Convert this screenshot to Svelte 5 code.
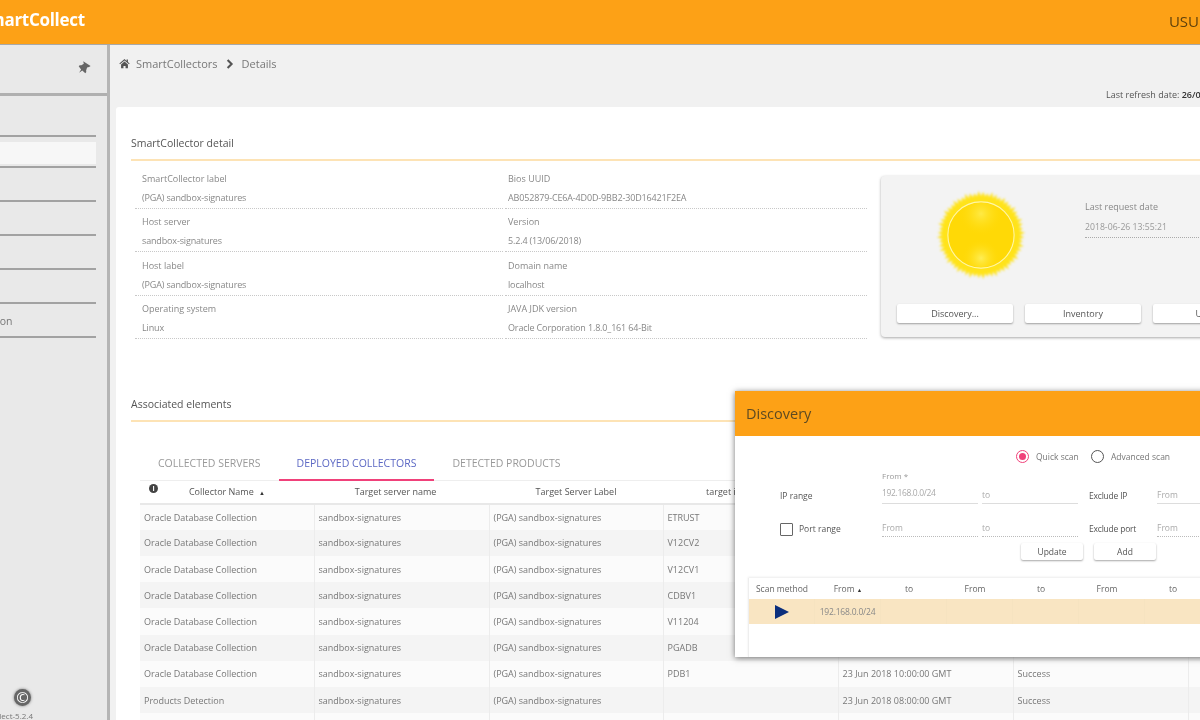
<script>
  const details = [
    ['SmartCollector label', '(PGA) sandbox-signatures', 'Bios UUID', 'AB052879-CE6A-4D0D-9BB2-30D16421F2EA'],
    ['Host server', 'sandbox-signatures', 'Version', '5.2.4 (13/06/2018)'],
    ['Host label', '(PGA) sandbox-signatures', 'Domain name', 'localhost'],
    ['Operating system', 'Linux', 'JAVA JDK version', 'Oracle Corporation 1.8.0_161 64-Bit']
  ];

  const oracle = 'Oracle Database Collection';
  const rows = [
    [oracle, 'ETRUST', '23 Jun 2018 10:00:00 GMT'],
    [oracle, 'V12CV2', '23 Jun 2018 10:00:00 GMT'],
    [oracle, 'V12CV1', '23 Jun 2018 10:00:00 GMT'],
    [oracle, 'CDBV1', '23 Jun 2018 10:00:00 GMT'],
    [oracle, 'V11204', '23 Jun 2018 10:00:00 GMT'],
    [oracle, 'PGADB', '23 Jun 2018 10:00:00 GMT'],
    [oracle, 'PDB1', '23 Jun 2018 10:00:00 GMT'],
    ['Products Detection', '', '23 Jun 2018 08:00:00 GMT'],
    ['Products Detection', '', '23 Jun 2018 08:00:00 GMT']
  ];

  const navItems = ['Overview', 'Servers', 'Collectors', 'Products', 'Reports', 'Administration'];
  const scanCols = ['From', 'to', 'From', 'to', 'From', 'to'];

  // jagged edge of the sun
  const rays = Array.from({ length: 120 }, (_, i) => {
    const a = (i / 120) * Math.PI * 2;
    const r = i % 2 ? 46 + (i * 7 % 3) : 42;
    return `${(50 + r * Math.cos(a)).toFixed(1)},${(50 + r * Math.sin(a)).toFixed(1)}`;
  }).join(' ');
</script>

<div class="page">
  <header class="topbar">
    <span class="brand">SmartCollect</span>
    <span class="user">USU</span>
  </header>

  <div class="shell">
    <aside class="sidebar">
      <div class="pin-row">
        <svg class="pin" viewBox="0 0 16 16" width="16" height="16"><path fill="#666" d="M6.2 1.2 13.6 6l-1.5 1.1-2 .3-1 3 .2 1.7-1 1.1-3-2.6-3.2 2.2 2-3.3L1.7 6.300 2.700 5.200l1.700.1 2.400-1.600z" /></svg>
      </div>
      <ul class="nav">
        {#each navItems as item, i}
          <li class:active={i === 0}><span>{item}</span></li>
        {/each}
      </ul>
      <div class="side-foot">
        <span class="copy">©</span>
        <span class="ver">SmartCollect-5.2.4</span>
      </div>
    </aside>

    <main class="content">
      <div class="crumbs">
        <svg viewBox="0 0 16 16" width="11" height="11"><path fill="#555" d="M8 1.500 0.500 8l1 1.100L8 3.500l6.500 5.600 1-1.100-2.500-2.200V2h-2v2.500zM3 9.500V15h3.500v-3.500h3V15H13V9.500L8 5.200z" /></svg>
        <span>SmartCollectors</span>
        <svg viewBox="0 0 10 12" width="8" height="10"><path fill="none" stroke="#555" stroke-width="2.600" d="M2 1l5 5-5 5" /></svg>
        <span>Details</span>
      </div>
      <div class="refresh">Last refresh date: <b>26/06/2018 13:55:21</b></div>

      <section class="card">
        <h2>SmartCollector detail</h2>
        <div class="detail-row">
          <div class="fields">
            {#each details as d}
              <div class="field"><label>{d[0]}</label><p>{d[1]}</p></div>
              <div class="field"><label>{d[2]}</label><p>{d[3]}</p></div>
            {/each}
          </div>
          <div class="status">
            <div class="status-top">
              <svg class="sun" viewBox="0 0 100 100" width="92" height="92">
                <defs>
                  <radialGradient id="top" cx="50%" cy="17%" r="35%">
                    <stop offset="0" stop-color="#ffea45" /><stop offset="1" stop-color="#ffd906" stop-opacity="0" />
                  </radialGradient>
                  <radialGradient id="bot" cx="50%" cy="86%" r="30%">
                    <stop offset="0" stop-color="#ffee55" /><stop offset="1" stop-color="#ffd906" stop-opacity="0" />
                  </radialGradient>
                </defs>
                <polygon class="rays" points={rays} fill="#ffe31a" />
                <circle cx="50" cy="50" r="36" fill="#ffd906" stroke="#fff6a8" stroke-width="1.200" />
                <circle cx="50" cy="50" r="35" fill="url(#top)" />
                <circle cx="50" cy="50" r="35" fill="url(#bot)" />
              </svg>
              <div class="last-req">
                <label>Last request date</label>
                <p>2018-06-26 13:55:21</p>
              </div>
            </div>
            <div class="status-btns">
              <button>Discovery...</button>
              <button>Inventory</button>
              <button>Update</button>
            </div>
          </div>
        </div>

        <h2 class="assoc">Associated elements</h2>
        <div class="tabs">
          <span>COLLECTED SERVERS</span>
          <span class="on">DEPLOYED COLLECTORS</span>
          <span>DETECTED PRODUCTS</span>
        </div>
        <table class="grid">
          <thead>
            <tr>
              <th class="first"><i class="info">i</i>Collector Name <em>▲</em></th>
              <th class="nudge">Target server name</th>
              <th>Target Server Label</th>
              <th>target instance name</th>
              <th>Start date</th>
              <th>Status</th>
              <th></th>
            </tr>
          </thead>
          <tbody>
            {#each rows as r}
              <tr>
                <td>{r[0]}</td>
                <td>sandbox-signatures</td>
                <td>(PGA) sandbox-signatures</td>
                <td>{r[1]}</td>
                <td>{r[2]}</td>
                <td>Success</td>
                <td></td>
              </tr>
            {/each}
          </tbody>
        </table>
      </section>
    </main>
  </div>

  <div class="modal">
    <div class="modal-head">Discovery</div>
    <div class="modal-body">
      <div class="radios">
        <span class="radio checked"></span><span>Quick scan</span>
        <span class="radio"></span><span>Advanced scan</span>
      </div>
      <div class="form-row ip">
        <span class="row-label">IP range</span>
        <div class="inp solid"><small>From *</small><span class="val">192.168.0.0/24</span></div>
        <div class="inp solid"><span>to</span></div>
        <span class="ex-label">Exclude IP</span>
        <div class="inp solid"><span>From</span></div>
      </div>
      <div class="form-row port">
        <span class="row-label check"><i class="box"></i>Port range</span>
        <div class="inp dotted"><span>From</span></div>
        <div class="inp dotted"><span>to</span></div>
        <span class="ex-label">Exclude port</span>
        <div class="inp dotted"><span>From</span></div>
      </div>
      <div class="form-btns">
        <button>Update</button>
        <button>Add</button>
      </div>
      <div class="scan">
        <div class="scan-head">
          <span>Scan method</span>
          <span>From <em>▲</em></span>
          {#each scanCols.slice(1) as c}<span class="shift">{c}</span>{/each}
        </div>
        <div class="scan-row">
          <span><svg viewBox="0 0 14 14" width="14" height="14"><path fill="#0b2f7d" d="M0 0l14 7-14 7z" /></svg></span>
          <span>192.168.0.0/24</span>
          {#each scanCols.slice(1) as _}<span></span>{/each}
        </div>
      </div>
    </div>
  </div>
</div>

<style>
  :global(body) {
    margin: 0;
    background: #f1f1f1;
  }
  .page {
    position: relative;
    width: 1200px;
    height: 720px;
    overflow: hidden;
    font-family: "Open Sans", "Liberation Sans", sans-serif;
    color: #666;
    filter: blur(0.7px);
  }
  .topbar {
    height: 45px;
    background: #fda116;
    border-bottom: 1px solid #a8a8a8;
    box-sizing: border-box;
    display: flex;
    align-items: center;
    justify-content: space-between;
    width: 1200px;
  }
  .brand {
    margin-left: -21px;
    color: #fff;
    font-weight: 700;
    font-size: 17px;
    letter-spacing: -0.3px;
    margin-top: -6px;
  }
  .user {
    color: #5f410c;
    font-size: 15px;
    margin-right: 1px;
    margin-top: -2px;
  }
  .shell {
    display: flex;
    width: 1700px;
    height: 675px;
    margin-left: -190px;
  }
  .sidebar {
    width: 297px;
    flex: none;
    background: #e9e9e9;
    border-right: 3px solid #b5b5b5;
    display: flex;
    flex-direction: column;
  }
  .pin-row {
    height: 48px;
    border-bottom: 3px solid #b0b0b0;
    display: flex;
    align-items: center;
    justify-content: flex-end;
    padding-right: 14px;
  }
  .pin {
    margin-top: -2px;
  }
  .nav {
    list-style: none;
    margin: 39px 11px 0 0;
    padding: 0;
    border-top: 2px solid #a2a2a2;
  }
  .nav li {
    height: 32px;
    border-bottom: 2px solid #a2a2a2;
    padding-left: 130px;
    font-size: 10.500px;
    line-height: 34px;
    color: #777;
    white-space: nowrap;
  }
  .nav li.active {
    height: 29px;
    padding-left: 0;
  }
  .nav li.active span {
    display: block;
    height: 22px;
    padding-left: 130px;
    line-height: 22px;
    background: #f7f7f7;
    position: relative;
    top: 5px;
  }
  .side-foot {
    margin-top: auto;
    display: flex;
    flex-direction: column;
    align-items: flex-end;
    padding-right: 74px;
  }
  .copy {
    width: 17px;
    height: 17px;
    margin-right: 2px;
    border-radius: 50%;
    background: #666;
    box-shadow: 0 0 3px #777;
    color: #fff;
    font: 15px/17px "Open Sans", sans-serif;
    text-align: center;
  }
  .ver {
    font-size: 8px;
    line-height: 9px;
    margin-top: 5px;
    color: #777;
    height: 9px;
  }
  .content {
    flex: 1;
    padding: 0 0 0 6px;
    background: #f1f1f1;
  }
  .crumbs {
    height: 37px;
    margin-left: 3px;
    display: flex;
    align-items: center;
    gap: 6px;
    font-size: 11px;
    color: #777;
  }
  .crumbs span + svg {
    margin: 0 2px;
  }
  .refresh {
    height: 25px;
    box-sizing: border-box;
    padding: 7px 0 0 990px;
    font-size: 9px;
    line-height: 11px;
    color: #555;
  }
  .refresh b {
    color: #333;
    font-weight: 600;
  }
  .card {
    background: #fff;
    border-radius: 3px;
    padding: 28px 0 0 15px;
    height: 640px;
  }
  h2 {
    margin: 0;
    font-size: 10.500px;
    line-height: 16px;
    font-weight: 400;
    color: #555;
    padding-bottom: 8px;
    border-bottom: 2px solid #fde3b5;
  }
  .detail-row {
    display: flex;
    margin-top: 12px;
  }
  .fields {
    width: 734px;
    display: grid;
    grid-template-columns: 370px 364px;
    grid-auto-rows: 36px;
    row-gap: 7.400px;
    margin-left: 4px;
    flex: none;
  }
  .field {
    border-bottom: 1px dotted #c8c8c8;
    padding-left: 7px;
    box-sizing: border-box;
    margin-right: 2px;
  }
  .field:nth-child(even) {
    padding-left: 3px;
  }
  label {
    display: block;
    font-size: 9px;
    line-height: 12px;
    color: #888;
  }
  .field p {
    margin: 7px 0 0;
    font-size: 9px;
    line-height: 12px;
    color: #888;
    letter-spacing: -0.15px;
    white-space: nowrap;
  }
  .status {
    width: 440px;
    height: 161px;
    margin: 3px 0 0 12px;
    flex: none;
    background: #f3f3f3;
    border-radius: 4px;
    box-shadow: 0 1px 3px rgba(0, 0, 0, 0.35);
    box-sizing: border-box;
    padding: 13px 0 0 16px;
  }
  .status-top {
    height: 115px;
    display: flex;
    align-items: flex-start;
  }
  .sun {
    margin-left: 38px;
    flex: none;
  }
  .rays {
    filter: blur(1px);
  }
  .last-req {
    margin: 12px 0 0 58px;
    width: 200px;
    border-bottom: 1px dotted #aaa;
    height: 36px;
  }
  .last-req p {
    margin: 8px 0 0;
    font-size: 8.700px;
    color: #999;
    line-height: 12px;
  }
  button {
    background: #fff;
    border: 0;
    border-radius: 2px;
    box-shadow: 0 1px 2px rgba(0, 0, 0, 0.35);
    font-family: inherit;
    font-size: 9px;
    color: #555;
    padding: 0;
  }
  .status-btns {
    display: flex;
    gap: 12px;
  }
  .status-btns button {
    width: 116px;
    height: 19px;
  }
  .assoc {
    margin-top: 57px;
  }
  .tabs {
    display: flex;
    margin: 26px 0 0 9px;
    height: 32px;
    font-size: 10.500px;
    line-height: 30px;
    color: #999;
  }
  .tabs span {
    padding: 0 18px;
  }
  .tabs .on {
    color: #5c68c4;
    border-bottom: 2px solid #f0417a;
    height: 31px;
  }
  .grid {
    margin-left: 9px;
    border-collapse: collapse;
    table-layout: fixed;
    width: 1235px;
    border-top: 1px solid #eee;
    font-size: 9px;
  }
  .grid th:nth-child(1) { width: 174px; }
  .grid th:nth-child(2) { width: 175px; }
  .grid th:nth-child(3) { width: 174px; }
  .grid th:nth-child(4) { width: 175px; }
  .grid th:nth-child(5) { width: 175px; }
  .grid th:nth-child(6) { width: 175px; }
  .grid th {
    height: 23px;
    box-sizing: border-box;
    font-weight: 400;
    color: #555;
    border-bottom: 2px solid #e8e8e8;
    padding: 0;
    white-space: nowrap;
    text-align: center;
  }
  .grid th.first {
    position: relative;
  }
  .grid th.nudge {
    padding-right: 12px;
  }
  .info {
    position: absolute;
    left: 9px;
    top: 3px;
    width: 9px;
    height: 9px;
    border-radius: 50%;
    background: #444;
    color: #fff;
    font: 700 7px/9px "Open Sans", sans-serif;
  }
  .grid em {
    font-style: normal;
    font-size: 6px;
    margin-left: 3px;
    color: #333;
  }
  .grid td {
    height: 26.200px;
    padding: 0 0 0 4px;
    box-sizing: border-box;
    color: #777;
    white-space: nowrap;
    overflow: hidden;
    border-right: 1px solid #ececec;
  }
  .grid tbody tr:nth-child(odd) td {
    background: #fbfbfb;
  }
  .grid tbody tr:nth-child(even) td {
    background: #f4f4f4;
  }
  .modal {
    position: absolute;
    left: 735px;
    top: 391px;
    width: 520px;
    height: 266px;
    background: #fff;
    box-shadow: 0 1px 6px rgba(0, 0, 0, 0.55);
    z-index: 5;
    color: #777;
  }
  .modal-head {
    height: 45px;
    background: #fda116;
    color: #5d4a22;
    font-size: 14.500px;
    line-height: 45px;
    padding-left: 11px;
  }
  .modal-body {
    padding: 0 0 0 13px;
  }
  .radios {
    height: 40px;
    display: flex;
    align-items: center;
    padding-left: 268px;
    font-size: 8.500px;
    box-sizing: border-box;
  }
  .radios span:nth-child(2) {
    margin: 0 10px 0 7px;
    width: 45px;
    white-space: nowrap;
  }
  .radios span:nth-child(4) {
    margin-left: 7px;
  }
  .radio {
    width: 11px;
    height: 11px;
    border: 1.500px solid #555;
    border-radius: 50%;
    position: relative;
    flex: none;
  }
  .radio.checked {
    border-color: #f0417a;
  }
  .radio.checked::after {
    content: '';
    position: absolute;
    inset: 2px;
    border-radius: 50%;
    background: #f0417a;
  }
  .form-row {
    display: flex;
    align-items: flex-end;
    font-size: 8.500px;
  }
  .form-row.ip {
    height: 28px;
  }
  .form-row.port {
    height: 33px;
  }
  .row-label {
    width: 134px;
    padding-left: 32px;
    box-sizing: border-box;
    color: #555;
    line-height: 14px;
    padding-bottom: 1px;
    flex: none;
  }
  .check {
    display: flex;
    align-items: center;
    gap: 6px;
  }
  .box {
    width: 11px;
    height: 11px;
    border: 1.500px solid #666;
    border-radius: 1px;
    flex: none;
  }
  .inp {
    width: 96px;
    margin-right: 4px;
    flex: none;
    position: relative;
    height: 16px;
    line-height: 14px;
    color: #aaa;
    box-sizing: border-box;
  }
  .inp small {
    position: absolute;
    left: 0;
    top: -19px;
    font-size: 8px;
    color: #999;
  }
  .inp.solid {
    border-bottom: 1px solid #ddd;
  }
  .inp.dotted {
    border-bottom: 1px dotted #bbb;
  }
  .val {
    color: #aaa;
    letter-spacing: -0.35px;
    position: relative;
    top: -2px;
  }
  .ex-label {
    width: 68px;
    margin-left: 7px;
    color: #555;
    line-height: 14px;
    padding-bottom: 1px;
    flex: none;
    letter-spacing: -0.2px;
  }
  .form-btns {
    display: flex;
    gap: 11px;
    padding-left: 273px;
    margin-top: 6px;
  }
  .form-btns button {
    width: 62px;
    height: 17px;
    font-size: 8.500px;
  }
  .scan {
    margin-top: 18px;
    border-left: 1px solid #eee;
    height: 79px;
    box-shadow: 0 -1px 2px rgba(0, 0, 0, 0.08);
    font-size: 8.500px;
  }
  .scan-head,
  .scan-row {
    display: grid;
    grid-template-columns: repeat(7, 66px);
    align-items: center;
    text-align: center;
  }
  .scan-head {
    height: 21px;
    color: #666;
    white-space: nowrap;
  }
  .scan-head .shift {
    padding-right: 10px;
  }
  .scan-head em {
    font-style: normal;
    font-size: 5.500px;
    color: #333;
  }
  .scan-row {
    height: 25px;
    background: #f9e5c2;
    color: #888;
  }
  .scan-row span {
    height: 100%;
    display: flex;
    align-items: center;
    justify-content: center;
    border-right: 1px solid #f6e3c0;
    letter-spacing: -0.2px;
    white-space: nowrap;
  }
</style>
